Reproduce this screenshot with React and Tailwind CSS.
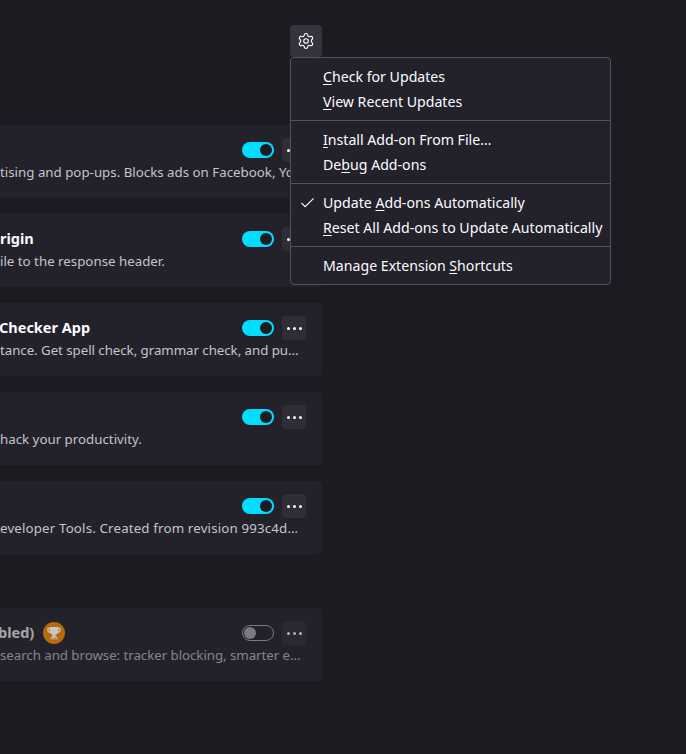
import { Settings } from "lucide-react";

function Toggle({ on }) {
  return on ? (
    <div className="w-8 h-4 rounded-full bg-[#00ddff] flex items-center justify-end pr-[2px]">
      <div className="w-3 h-3 rounded-full bg-[#1c1b22]" />
    </div>
  ) : (
    <div className="w-8 h-4 rounded-full border border-[#8f8f9d] flex items-center pl-[1px]">
      <div className="w-3 h-3 rounded-full bg-[#8f8f9d]" />
    </div>
  );
}

function AddonRow({ title, desc, on = true, badge, titleClass = "", descClass = "", dim }) {
  return (
    <div className="h-[73px] bg-[#23222b] rounded-r flex flex-col pr-4 pt-[13px]">
      <div className="flex">
        <div className="flex-1 min-w-0 overflow-hidden">
          <div className="h-6 flex items-center gap-[9px] whitespace-nowrap">
            <span className={`text-[14.500px] font-bold text-[#fbfbfe] ${dim ? "opacity-60" : ""} ${titleClass}`}>{title}</span>
            {badge && (
              <span className="w-[22px] h-[22px] rounded-full bg-[#b56b0c] flex items-center justify-center">
                <svg width="14" height="14" viewBox="0 0 16 16" fill="#c9c7c4">
                  <path d="M3 1h10v1h2.500v3c0 1.500-1.200 2.600-3 2.700-.6 1.200-1.600 2-2.800 2.200V12h1.800v1.500H4.500V12h1.800V9.900C5.100 9.700 4.100 8.900 3.500 7.700 1.700 7.600.5 6.500.5 5V2H3V1zM2 3.200V5c0 .6.500 1.100 1.100 1.200L3 3.200H2zm12 0h-1l-.1 3c.6-.1 1.100-.6 1.100-1.200V3.200zM3.500 14.200h9V15h-9z" />
                </svg>
              </span>
            )}
          </div>
        </div>
        <div className="flex items-start ml-2 shrink-0 gap-2">
          <div className={`h-6 flex items-center ${dim ? "opacity-80" : ""}`}>
            <Toggle on={on} />
          </div>
          <div className={`w-6 h-6 rounded flex items-center justify-center gap-[3px] ${dim ? "bg-[#2a2931]" : "bg-[#2f2e37]"}`}>
            <span className={`w-[3px] h-[3px] rounded-full ${dim ? "bg-[#b4b4ba]" : "bg-[#fbfbfe]"}`} />
            <span className={`w-[3px] h-[3px] rounded-full ${dim ? "bg-[#b4b4ba]" : "bg-[#fbfbfe]"}`} />
            <span className={`w-[3px] h-[3px] rounded-full ${dim ? "bg-[#b4b4ba]" : "bg-[#fbfbfe]"}`} />
          </div>
        </div>
      </div>
      <div className={`text-[13.300px] leading-5 whitespace-nowrap overflow-hidden text-[#c4c4cb] ${dim ? "opacity-60" : ""} ${descClass}`}>
        {desc}
      </div>
    </div>
  );
}

function MenuItem({ before, mark, after, checked }) {
  return (
    <div className="h-[25px] flex items-center relative pl-8 text-[14.150px] text-[#fbfbfe] whitespace-nowrap">
      {checked && (
        <svg className="absolute left-[9px] top-[5px]" width="15" height="15" viewBox="0 0 16 16" fill="none" stroke="#fbfbfe" strokeWidth="1.200">
          <path d="M1.500 8.500 5.500 12.500 14.500 3.500" />
        </svg>
      )}
      <span>
        {before}
        <span className="underline underline-offset-2">{mark}</span>
        {after}
      </span>
    </div>
  );
}

function Sep() {
  return <div className="h-px bg-[#52525e] my-[6px]" />;
}

export default function App() {
  return (
    <div className="relative h-[754px] w-[686px] overflow-hidden bg-[#1c1b22] font-['Noto_Sans',sans-serif]">
      <div className="w-[322px] pt-[25px]">
        <div className="flex justify-end">
          <button className="w-8 h-8 rounded bg-[#35343c] flex items-center justify-center">
            <Settings size={18} color="#fbfbfe" strokeWidth={1.500} />
          </button>
        </div>
        <div className="mt-[68px] flex flex-col gap-4">
          <AddonRow title="" desc="tising and pop-ups. Blocks ads on Facebook, Yo" />
          <AddonRow title="rigin" desc="ile to the response header." />
          <AddonRow title="Checker App" desc="tance. Get spell check, grammar check, and pu…" titleClass="-ml-px" descClass="tracking-[-0.05px]" />
          <AddonRow title="" desc="hack your productivity." />
          <AddonRow title="" desc="eveloper Tools. Created from revision 993c4d…" descClass="tracking-[0.16px]" />
        </div>
        <div className="mt-[54px]">
          <AddonRow title="bled)" desc="search and browse: tracker blocking, smarter e…" on={false} badge dim titleClass="-ml-[2px]" descClass="tracking-[-0.05px]" />
        </div>
      </div>
      <div className="absolute left-[290px] top-[57px] w-[321px] h-[228px] rounded bg-[#23222b] border border-[#52525e] py-[6px]">
        <MenuItem mark="C" after="heck for Updates" />
        <MenuItem mark="V" after="iew Recent Updates" />
        <Sep />
        <MenuItem mark="I" after="nstall Add-on From File…" />
        <MenuItem before="De" mark="b" after="ug Add-ons" />
        <Sep />
        <MenuItem before="Update " mark="A" after="dd-ons Automatically" checked />
        <MenuItem mark="R" after="eset All Add-ons to Update Automatically" />
        <Sep />
        <MenuItem before="Manage Extension " mark="S" after="hortcuts" />
      </div>
    </div>
  );
}
